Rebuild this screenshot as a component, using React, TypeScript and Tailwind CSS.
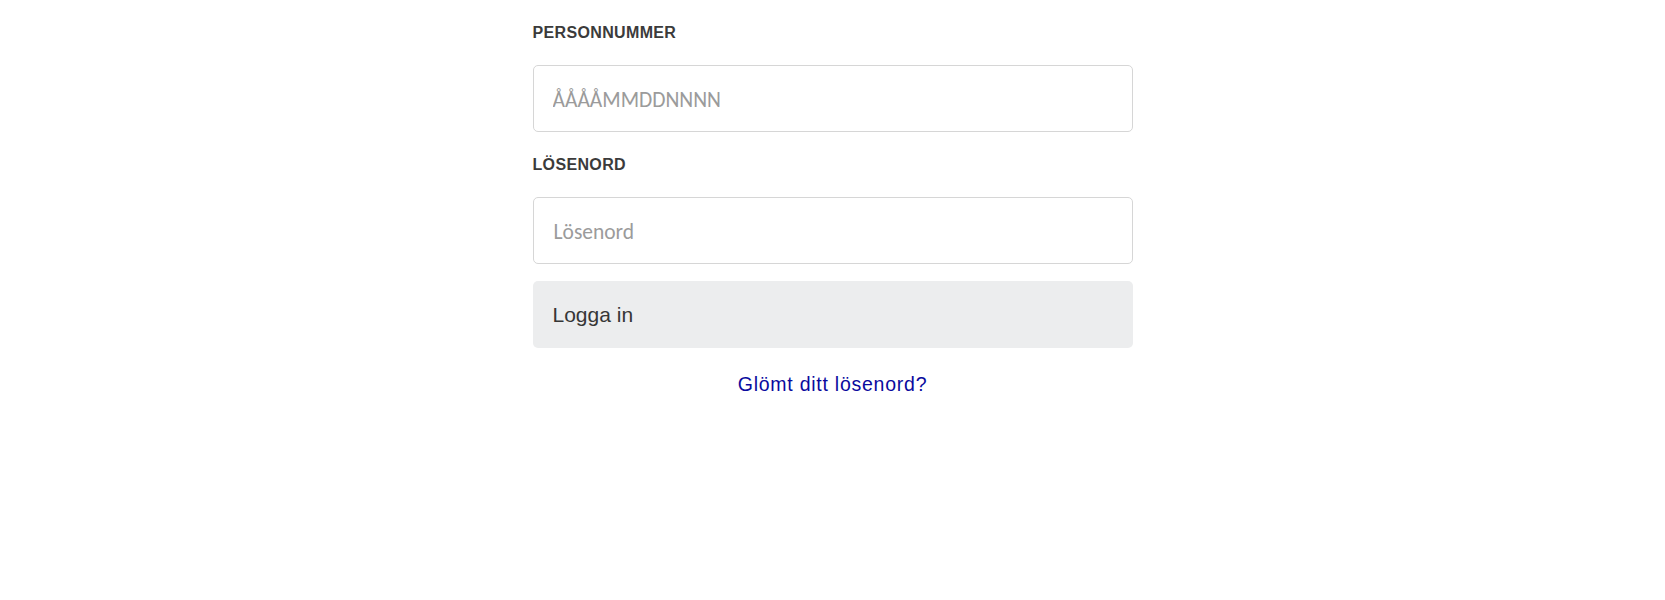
import React from 'react';

const App: React.FC = () => {
  return (
    <div className="min-h-[600px] w-full bg-white" style={{ fontFamily: '"Liberation Sans", Arial, sans-serif' }}>
      <form className="mx-auto flex w-[600px] flex-col pt-[23px]" onSubmit={(e) => e.preventDefault()}>
        <label htmlFor="pnr" className="block text-[16px] leading-[20px] font-bold tracking-[0.35px] text-[#3b3b3b]">
          PERSONNUMMER
        </label>
        <input
          id="pnr"
          type="text"
          placeholder="ÅÅÅÅMMDDNNNN"
          className="mt-[22px] h-[67px] w-full rounded-[5px] border border-[#d6d6d6] bg-white px-[19px] pt-[2px] text-[21.5px] text-[#333] outline-none placeholder:text-[#9b9b9b]"
          style={{ fontFamily: 'Calibri, Carlito, Lato, sans-serif' }}
        />
        <label htmlFor="pwd" className="mt-[23px] block text-[16px] leading-[20px] font-bold tracking-[0.35px] text-[#3b3b3b]">
          LÖSENORD
        </label>
        <input
          id="pwd"
          type="password"
          placeholder="Lösenord"
          className="mt-[22px] h-[67px] w-full rounded-[5px] border border-[#d6d6d6] bg-white px-[20px] pt-[2px] text-[21.5px] text-[#333] outline-none placeholder:text-[#9b9b9b]"
          style={{ fontFamily: 'Calibri, Carlito, Lato, sans-serif' }}
        />
        <button
          type="submit"
          className="mt-[17px] h-[67px] w-full rounded-[5px] bg-[#ecedee] px-[20px] text-left text-[21px] text-[#363636]"
        >
          Logga in
        </button>
        <div className="mt-[24px] text-center">
          <a href="#" className="text-[19.5px] leading-[24px] tracking-[0.75px] text-[#0a0a9e]">
            Glömt ditt lösenord?
          </a>
        </div>
      </form>
    </div>
  );
};

export default App;
